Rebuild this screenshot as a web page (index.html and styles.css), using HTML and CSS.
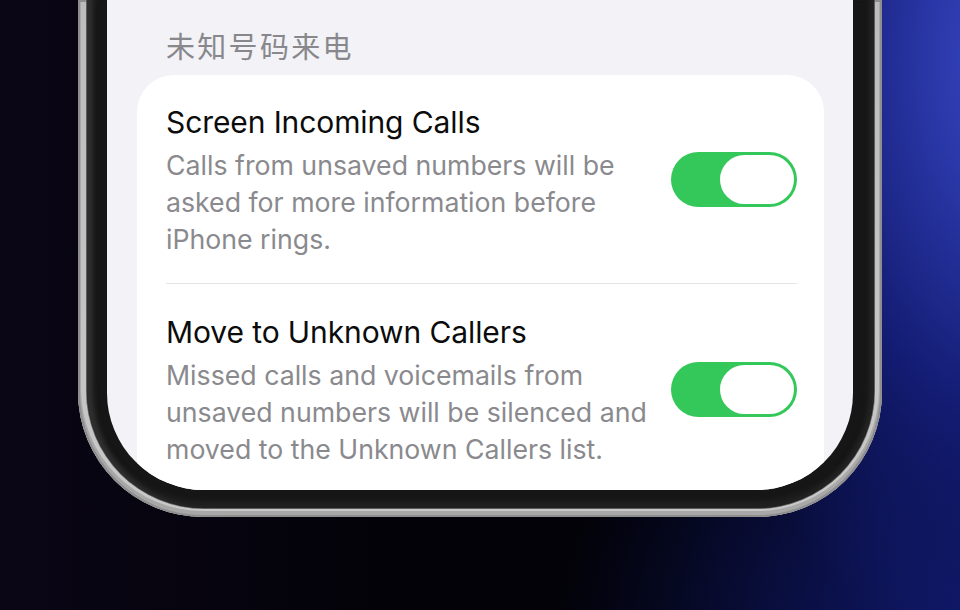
FILE: index.html
```html
<!DOCTYPE html>
<html lang="zh-CN">
<head>
<meta charset="utf-8">
<title>未知号码来电</title>
<link rel="stylesheet" href="styles.css">
</head>
<body>
<div class="phone">
  <div class="bezel">
    <div class="screen">
      <div class="section-header">未知号码来电</div>
      <div class="card">
        <div class="row">
          <div class="row-text">
            <div class="row-title">Screen Incoming Calls</div>
            <div class="row-desc">Calls from unsaved numbers will be<br>asked for more information before<br>iPhone rings.</div>
          </div>
          <div class="toggle"><div class="knob"></div></div>
        </div>
        <div class="row">
          <div class="row-text">
            <div class="row-title">Move to Unknown Callers</div>
            <div class="row-desc">Missed calls and voicemails from<br>unsaved numbers will be silenced and<br>moved to the Unknown Callers list.</div>
          </div>
          <div class="toggle"><div class="knob"></div></div>
        </div>
      </div>
    </div>
  </div>
</div>
</body>
</html>
```
FILE: styles.css
```css
html, body {
  margin: 0;
  padding: 0;
}
body {
  width: 960px;
  height: 610px;
  overflow: hidden;
  font-family: Inter, "Noto Sans", "Noto Sans CJK SC", sans-serif;
  background:
    radial-gradient(ellipse 330px 620px at 1010px 60px, #3a49c9 0%, #26339f 30%, #121b70 60%, rgba(8,12,60,0) 100%),
    radial-gradient(ellipse 420px 300px at 980px 620px, #0f1866 0%, rgba(8,12,60,0) 100%),
    linear-gradient(90deg, #0a0616 0%, #030208 40%, #020208 70%, #040626 100%);
}
.phone {
  width: 804px;
  margin-left: 78px;
  padding: 0 8px 9px 9px;
  box-sizing: border-box;
  background: linear-gradient(180deg, #bdbdbd, #c8c8c8);
  border-radius: 0 0 125px 125px;
  box-shadow: inset 0 0 0 2px #8e8e8e, inset 0 -3px 0 3px #a8a8a8;
}
.bezel {
  padding: 0 21px 18px 20px;
  background: #161616;
  border-radius: 0 0 117px 117px;
  box-shadow: 0 0 0 1px #5c5c5c, inset 9px 0 5px -3px #303030, inset -9px 0 5px -4px #242424, inset 0 -9px 6px -3px #232323;
}
.screen {
  height: 490px;
  box-sizing: border-box;
  padding-top: 27px;
  background: #f2f2f7;
  border-radius: 0 0 97px 97px;
  overflow: hidden;
}
.section-header {
  margin: 0 0 12px 59px;
  height: 36px;
  line-height: 36px;
  font-family: "Noto Sans CJK SC", sans-serif;
  font-size: 29px;
  letter-spacing: 2.3px;
  color: #88888c;
}
.card {
  margin: 0 29px 0 30px;
  padding: 0 27px 60px 29px;
  background: #ffffff;
  border-radius: 37px;
}
.row {
  display: flex;
  align-items: center;
  justify-content: space-between;
  padding: 29px 0 25px;
}
.row + .row {
  border-top: 1px solid #e4e4e8;
  padding-top: 30px;
}
.row-title {
  font-size: 30px;
  line-height: 36px;
  color: #0c0c0c;
  letter-spacing: -0.1px;
  margin-bottom: 7px;
}
.row-desc {
  font-size: 26.7px;
  line-height: 37px;
  color: #8a8a8e;
}
.toggle {
  width: 126px;
  height: 55px;
  box-sizing: border-box;
  padding: 3px;
  margin-bottom: 4px;
  border-radius: 28px;
  background: #34c759;
  display: flex;
  justify-content: flex-end;
  flex-shrink: 0;
}
.knob {
  width: 74px;
  height: 49px;
  border-radius: 25px;
  background: #ffffff;
}
```
